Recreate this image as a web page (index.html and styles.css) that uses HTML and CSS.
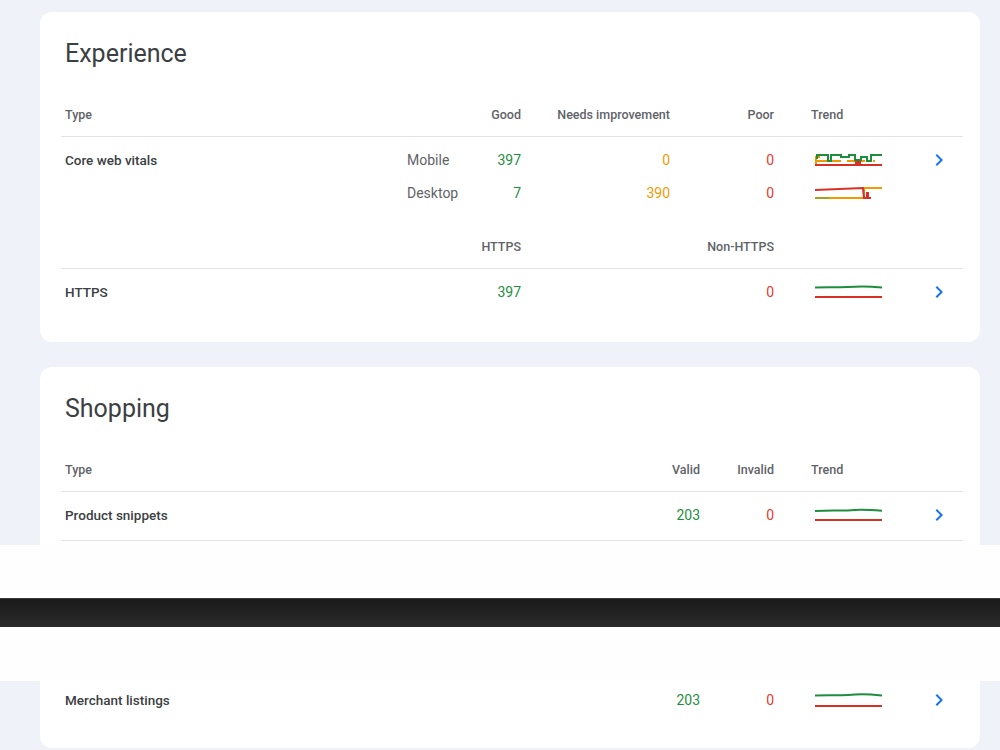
FILE: index.html
```html
<!DOCTYPE html>
<html>
<head>
<meta charset="utf-8">
<link rel="stylesheet" href="styles.css">
</head>
<body>
<div class="page">
  <section class="upper">
    <div class="card">
      <h2 class="card-title">Experience</h2>
      <div class="tbl exp">
        <div class="row head">
          <span class="c-first">Type</span><span></span><span class="num">Good</span><span class="num">Needs improvement</span><span class="num">Poor</span><span class="trend-h">Trend</span><span></span>
        </div>
        <div class="group">
          <div class="row sub">
            <span class="c-first name">Core web vitals</span><span class="dev">Mobile</span><span class="num good">397</span><span class="num warn">0</span><span class="num bad">0</span>
            <span class="trend"><svg width="68" height="16" viewBox="0 0 68 16"><path d="M1 13 V5 H5 M0 9 H12 M17 9 H26 M32 9 H40 M46 9 H50 M58 9 H60" fill="none" stroke="#f29900" stroke-width="2"/><path d="M2 7 V3 H13 V9 H16 V3 H26 V5 H34 V3 H40 V8 H46 V5 H52 V9 H56 V3 H67" fill="none" stroke="#1e8e3e" stroke-width="2"/><path d="M0 13 H67" fill="none" stroke="#d93025" stroke-width="2"/><rect x="40" y="9" width="6" height="4" fill="#d93025"/></svg></span>
            <span class="chev"><svg width="24" height="24" viewBox="0 0 24 24"><path d="M10 6L8.59 7.41 13.17 12l-4.58 4.59L10 18l6-6z" fill="#1a73e8"/></svg></span>
          </div>
          <div class="row sub">
            <span class="c-first"></span><span class="dev">Desktop</span><span class="num good">7</span><span class="num warn">390</span><span class="num bad">0</span>
            <span class="trend"><svg width="68" height="16" viewBox="0 0 68 16"><path d="M0 13 H49 V3 H67" fill="none" stroke="#f29900" stroke-width="2"/><path d="M0 5 L48 3 L49 13 H53 V8 H52 V13 H56" fill="none" stroke="#d93025" stroke-width="2"/><path d="M0 13 H14" fill="none" stroke="#9aa520" stroke-width="2"/></svg></span>
            <span></span>
          </div>
        </div>
        <div class="row head subhead">
          <span class="c-first"></span><span></span><span class="num">HTTPS</span><span></span><span class="num">Non-HTTPS</span><span></span><span></span>
        </div>
        <div class="group">
          <div class="row sub">
            <span class="c-first name">HTTPS</span><span></span><span class="num good">397</span><span></span><span class="num bad">0</span>
            <span class="trend"><svg width="68" height="16" viewBox="0 0 68 16"><path d="M0 3.5 Q10 3 20 3.2 T40 2.8 T67 3.4" fill="none" stroke="#1e8e3e" stroke-width="2"/><path d="M0 13 H67" fill="none" stroke="#d93025" stroke-width="2"/></svg></span>
            <span class="chev"><svg width="24" height="24" viewBox="0 0 24 24"><path d="M10 6L8.59 7.41 13.17 12l-4.58 4.59L10 18l6-6z" fill="#1a73e8"/></svg></span>
          </div>
        </div>
      </div>
    </div>

    <div class="card cut">
      <h2 class="card-title">Shopping</h2>
      <div class="tbl shop">
        <div class="row head">
          <span class="c-first">Type</span><span class="num">Valid</span><span class="num">Invalid</span><span class="trend-h">Trend</span><span></span>
        </div>
        <div class="group line">
          <div class="row sub">
            <span class="c-first name">Product snippets</span><span class="num good">203</span><span class="num bad">0</span>
            <span class="trend"><svg width="68" height="16" viewBox="0 0 68 16"><path d="M0 4 Q12 3.5 22 3.6 T40 3 T67 3.8" fill="none" stroke="#1e8e3e" stroke-width="2"/><path d="M0 13 H67" fill="none" stroke="#d93025" stroke-width="2"/></svg></span>
            <span class="chev"><svg width="24" height="24" viewBox="0 0 24 24"><path d="M10 6L8.59 7.41 13.17 12l-4.58 4.59L10 18l6-6z" fill="#1a73e8"/></svg></span>
          </div>
        </div>
      </div>
    </div>
  </section>

  <div class="band light"></div>
  <div class="band dark"></div>
  <div class="band light2"></div>

  <section class="lower">
    <div class="card cont">
      <div class="tbl shop">
        <div class="row single">
          <span class="c-first name">Merchant listings</span><span class="num good">203</span><span class="num bad">0</span>
          <span class="trend"><svg width="68" height="16" viewBox="0 0 68 16"><path d="M0 3.5 Q12 3 22 3.3 T40 2.6 T67 3.4" fill="none" stroke="#1e8e3e" stroke-width="2"/><path d="M0 14 H67" fill="none" stroke="#d93025" stroke-width="2"/></svg></span>
          <span class="chev"><svg width="24" height="24" viewBox="0 0 24 24"><path d="M10 6L8.59 7.41 13.17 12l-4.58 4.59L10 18l6-6z" fill="#1a73e8"/></svg></span>
        </div>
      </div>
    </div>
  </section>
</div>
</body>
</html>
```

FILE: styles.css
```css
* { box-sizing: border-box; }

html, body {
  margin: 0;
  padding: 0;
  background: #eff2f8;
  font-family: Roboto, "Liberation Sans", Arial, sans-serif;
  color: #3c4043;
}

.page {
  width: 1000px;
  height: 750px;
  overflow: hidden;
}

.upper {
  display: flex;
  flex-direction: column;
  gap: 25px;
  padding: 12px 20px 0 40px;
}

.card {
  background: #fff;
  border-radius: 12px;
  padding: 26px 17px 25px 21px;
}

.card.cut {
  height: 178px;
  overflow: hidden;
  border-radius: 12px 12px 0 0;
  padding-bottom: 0;
}

.card-title {
  margin: 0 0 22px 4px;
  font-size: 25px;
  line-height: 32px;
  font-weight: 400;
  color: #3c4043;
}

.tbl .row {
  display: grid;
  align-items: center;
}

.exp .row {
  grid-template-columns: 342px 67px 55px 149px 104px 122px 63px;
}

.shop .row {
  grid-template-columns: 569px 74px 74px 122px 63px;
}

.row.head {
  padding: 15px 0 13px;
  font-size: 12.5px;
  line-height: 16px;
  font-weight: 500;
  color: #5f6368;
  border-bottom: 1px solid #e3e3e3;
}

.row.subhead {
  padding-top: 21px;
}

.group {
  padding: 6px 0 9px;
}

.group.line {
  border-bottom: 1px solid #e3e3e3;
}

.row.sub {
  height: 33px;
  font-size: 14px;
  line-height: 20px;
}

.row.single {
  height: 38px;
  font-size: 14px;
  line-height: 20px;
}

.c-first {
  padding-left: 4px;
}

.name {
  font-weight: 500;
  font-size: 13.5px;
  color: #3c4043;
}

.dev {
  padding-left: 4px;
  color: #5f6368;
}

.num {
  text-align: right;
  padding-right: 4px;
}

.good { color: #1e8e3e; }
.warn { color: #f29900; }
.bad { color: #e5392f; }

.trend-h {
  padding-left: 33px;
}

.trend {
  padding-left: 37px;
  display: flex;
  align-items: center;
}

.trend svg { display: block; }

.chev {
  display: flex;
  align-items: center;
  padding-left: 27px;
}

.chev svg { display: block; }

.band.light { height: 53px; background: #fefefe; }
.band.dark { height: 29px; background: linear-gradient(#1a1a1a, #2b2b2b); border-top: 1px solid #3a3a3a; }
.band.light2 { height: 54px; background: #fefefe; }

.lower {
  padding: 0 20px 2px 40px;
}

.card.cont {
  border-radius: 0 0 12px 12px;
  padding: 0 17px 29px 21px;
}
```
